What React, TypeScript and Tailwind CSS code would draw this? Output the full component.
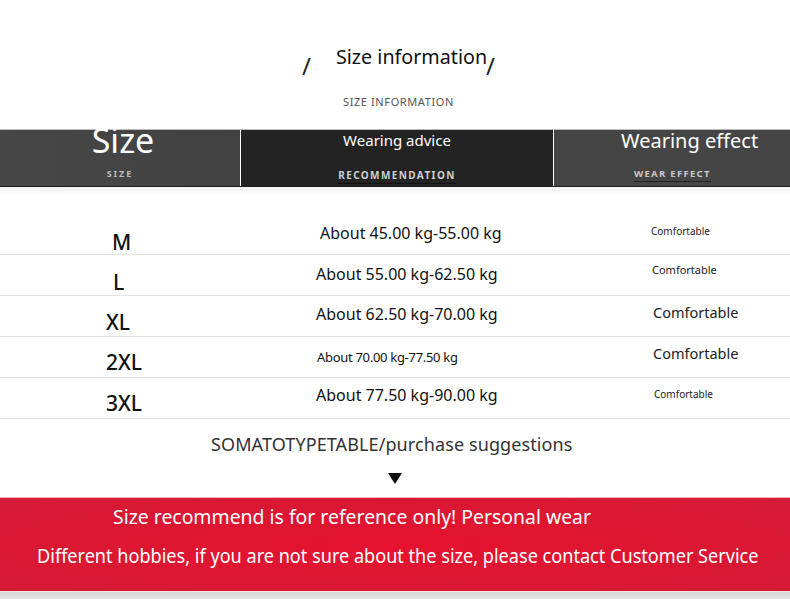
const rows = [
  {
    size: "M",
    sizeCls: "pl-[112px] pt-[15px]",
    weight: "About 45.00 kg-55.00 kg",
    weightCls: "pl-[20px] pt-[8px] text-[16px]",
    comfCls: "pl-[1px] pt-[8px] text-[10px]",
    rowCls: "h-[58px] pt-[18px]",
  },
  {
    size: "L",
    sizeCls: "pl-[113px] pt-[15px]",
    weight: "About 55.00 kg-62.50 kg",
    weightCls: "pl-[16px] pt-[9px] text-[16px]",
    comfCls: "pl-[2px] pt-[7px] text-[11px]",
    rowCls: "h-[41px]",
  },
  {
    size: "XL",
    sizeCls: "pl-[106px] pt-[14px]",
    weight: "About 62.50 kg-70.00 kg",
    weightCls: "pl-[16px] pt-[8px] text-[16px]",
    comfCls: "pl-[3px] pt-[8px] text-[14.5px]",
    rowCls: "h-[41px]",
  },
  {
    size: "2XL",
    sizeCls: "pl-[106px] pt-[13px]",
    weight: "About 70.00 kg-77.50 kg",
    weightCls: "pl-[17px] pt-[10px] text-[13px] tracking-[-0.3px]",
    comfCls: "pl-[3px] pt-[8px] text-[14.5px]",
    rowCls: "h-[41px]",
  },
  {
    size: "3XL",
    sizeCls: "pl-[106px] pt-[13px]",
    weight: "About 77.50 kg-90.00 kg",
    weightCls: "pl-[16px] pt-[7px] text-[16px]",
    comfCls: "pl-[4px] pt-[8px] text-[10px]",
    rowCls: "h-[41px]",
  },
]

export default function App() {
  return (
    <div className="w-[790px] h-[599px] overflow-hidden bg-white font-['Noto_Sans',sans-serif] text-[#1a1a1a]">
      {/* title */}
      <div className="h-[129px]">
        <div className="flex items-start pl-[302px] pt-[44px]">
          <span className="mt-[9px] text-[24px] leading-[26px] text-[#222]">/</span>
          <span className="ml-[25px] text-[19.7px] leading-[26px] text-[#111]">Size information</span>
          <span className="-ml-[1px] mt-[9px] text-[24px] leading-[26px] text-[#222]">/</span>
        </div>
        <div className="pl-[343px] pt-[16px] text-[11px] leading-[14px] text-[#555] tracking-[0.6px]">
          SIZE INFORMATION
        </div>
      </div>

      {/* header bar */}
      <div className="flex h-[57px] border-t border-[#bdbdbd] bg-white">
        <div className="w-[240px] bg-gradient-to-r from-[#474747] to-[#414141] flex flex-col items-center">
          <span className="-mt-[8px] ml-[6px] text-[34px] leading-[36px] text-white">Size</span>
          <span className="mt-[10px] text-[9px] leading-[12px] font-bold tracking-[2px] text-[#bdbdbd]">SIZE</span>
        </div>
        <div className="ml-[1px] w-[312px] bg-[#232323] flex flex-col items-center">
          <span className="text-[15px] leading-[20px] text-white">Wearing advice</span>
          <span className="mt-[19px] text-[10px] leading-[13px] font-bold tracking-[1.4px] text-[#cfcfcf] border-b border-[#111] pb-[1px]">
            RECOMMENDATION
          </span>
        </div>
        <div className="ml-[1px] flex-1 bg-[#454545] flex flex-col items-start">
          <span className="pl-[67px] -mt-[1px] text-[20px] leading-[24px] text-white">Wearing effect</span>
          <span className="ml-[80px] mt-[14px] text-[9.5px] leading-[13px] font-bold tracking-[1.3px] text-[#c8c8c8] border-b border-[#222] pb-[1px]">
            WEAR EFFECT
          </span>
        </div>
      </div>
      <div className="h-[1px] bg-[#1e1e1e]" />

      {/* rows */}
      <div className="bg-gradient-to-b from-[#f2f2f2] to-white h-[10px]" />
      {rows.map((r) => (
        <div key={r.size} className={`flex border-b border-[#e2e2e2] ${r.rowCls}`}>
          <div className={`w-[300px] ${r.sizeCls}`}>
            <span className="font-medium text-[21px] leading-[24px] text-[#111]">{r.size}</span>
          </div>
          <div className={`w-[350px] leading-[20px] text-[#111] ${r.weightCls}`}>{r.weight}</div>
          <div className={`flex-1 leading-[16px] text-[#222] ${r.comfCls}`}>Comfortable</div>
        </div>
      ))}

      {/* suggestions */}
      <div className="mt-[13px] pl-[211px] text-[18px] leading-[24px] tracking-[0.1px] text-[#333]">
        SOMATOTYPETABLE/purchase suggestions
      </div>
      <div className="mt-[17px] flex justify-center">
        <svg width="14" height="11" viewBox="0 0 14 11">
          <polygon points="0,0 14,0 7,11" fill="#111" />
        </svg>
      </div>

      {/* banner */}
      <div className="mt-[13px] h-[94px] border-t border-[#f0b5bf] bg-[radial-gradient(ellipse_at_center,#e6122f,#d31b36)] text-white">
        <div className="pl-[113px] pt-[7px] text-[20px] leading-[24px] whitespace-nowrap">
          <span className="inline-block origin-left scale-x-[0.97]">
            Size recommend is for reference only! Personal wear
          </span>
        </div>
        <div className="pl-[37px] pt-[15px] text-[20px] leading-[24px] whitespace-nowrap">
          <span className="inline-block origin-left scale-x-[0.905]">
            Different hobbies, if you are not sure about the size, please contact Customer Service
          </span>
        </div>
      </div>
      <div className="h-[1px] bg-[#f3e3e6]" />
      <div className="h-[10px] bg-gradient-to-b from-[#d6d6d6] to-[#ebebeb]" />
    </div>
  )
}
